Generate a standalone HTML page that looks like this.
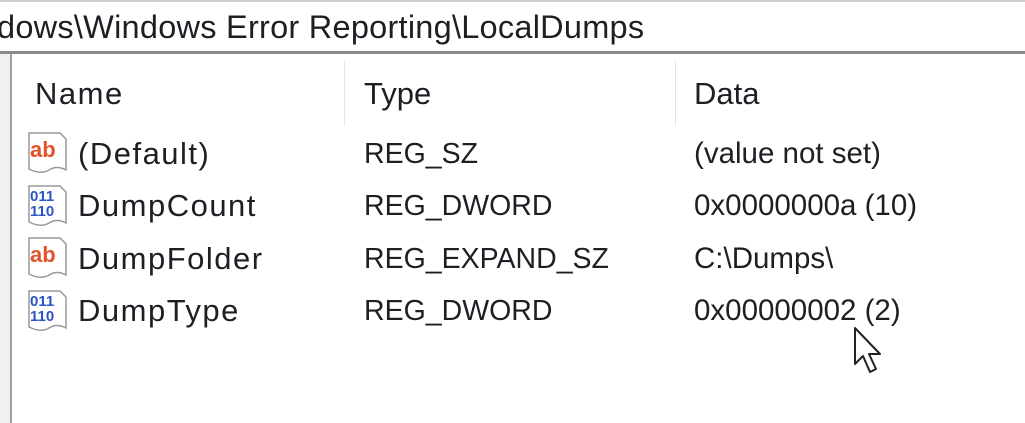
<!DOCTYPE html>
<html><head><style>
html,body{margin:0;padding:0;width:1025px;height:423px;overflow:hidden;background:#fff;font-family:"Liberation Sans",sans-serif;color:#1e1e24}
.t{position:absolute;font-size:31px;white-space:nowrap;line-height:1}
.n{letter-spacing:1.5px}
.ty{font-size:28.5px;top:auto}
.d{font-size:29.5px}
.ic{position:absolute;width:44px;height:46px}
</style></head><body>
<div style="position:absolute;left:0;top:0;width:1025px;height:2px;background:#cfcfcf"></div>
<div class="t" style="left:-3px;top:11px;font-size:32.5px;letter-spacing:0.25px">dows\Windows Error Reporting\LocalDumps</div>
<div style="position:absolute;left:0;top:51px;width:1025px;height:3px;background:#8a8a8a"></div>
<div style="position:absolute;left:0;top:54px;width:10px;height:369px;background:#f0f0f0"></div>
<div style="position:absolute;left:10px;top:54px;width:2px;height:369px;background:#a0a0a0"></div>
<div style="position:absolute;left:344px;top:60px;width:1px;height:66px;background:#e6e6e6"></div>
<div style="position:absolute;left:675px;top:60px;width:1px;height:66px;background:#e6e6e6"></div>
<div class="t n" style="left:35px;top:78px">Name</div>
<div class="t" style="left:364px;top:78px">Type</div>
<div class="t" style="left:694px;top:78px">Data</div>

<svg class="ic" style="left:26px;top:130px" viewBox="0 0 44 46"><path d="M3 3H34L40 9V40Q31 35 23 40T3 39Z" fill="#fff" stroke="#999" stroke-width="1.5"/><text x="4" y="27" font-family="Liberation Sans" font-weight="bold" font-size="22" fill="#e2532a">ab</text></svg>
<svg class="ic" style="left:26px;top:183px" viewBox="0 0 44 46"><path d="M3 3H34L40 9V40Q31 35 23 40T3 39Z" fill="#fff" stroke="#999" stroke-width="1.5"/><text x="4" y="18" font-family="Liberation Sans" font-weight="bold" font-size="15" fill="#2b55c4">011</text><text x="4" y="33" font-family="Liberation Sans" font-weight="bold" font-size="15" fill="#2b55c4">110</text></svg>
<svg class="ic" style="left:26px;top:235px" viewBox="0 0 44 46"><path d="M3 3H34L40 9V40Q31 35 23 40T3 39Z" fill="#fff" stroke="#999" stroke-width="1.5"/><text x="4" y="27" font-family="Liberation Sans" font-weight="bold" font-size="22" fill="#e2532a">ab</text></svg>
<svg class="ic" style="left:26px;top:288px" viewBox="0 0 44 46"><path d="M3 3H34L40 9V40Q31 35 23 40T3 39Z" fill="#fff" stroke="#999" stroke-width="1.5"/><text x="4" y="18" font-family="Liberation Sans" font-weight="bold" font-size="15" fill="#2b55c4">011</text><text x="4" y="33" font-family="Liberation Sans" font-weight="bold" font-size="15" fill="#2b55c4">110</text></svg>

<div class="t n" style="left:78px;top:138px">(Default)</div>
<div class="t ty" style="left:364px;top:140px">REG_SZ</div>
<div class="t d" style="left:694px;top:139px">(value not set)</div>
<div class="t n" style="left:78px;top:190px">DumpCount</div>
<div class="t ty" style="left:364px;top:192px">REG_DWORD</div>
<div class="t d" style="left:694px;top:191px">0x0000000a (10)</div>
<div class="t n" style="left:78px;top:243px">DumpFolder</div>
<div class="t ty" style="left:364px;top:245px">REG_EXPAND_SZ</div>
<div class="t d" style="left:694px;top:244px">C:\Dumps\</div>
<div class="t n" style="left:78px;top:295px">DumpType</div>
<div class="t ty" style="left:364px;top:297px">REG_DWORD</div>
<div class="t d" style="left:694px;top:296px">0x00000002 (2)</div>

<svg style="position:absolute;left:852px;top:326px" width="40" height="52" viewBox="0 0 40 52"><path d="M3 2V38L11 30L18 46L24 43L17 28H28Z" fill="#fff" stroke="#222" stroke-width="2" stroke-linejoin="round"/></svg>
</body></html>
